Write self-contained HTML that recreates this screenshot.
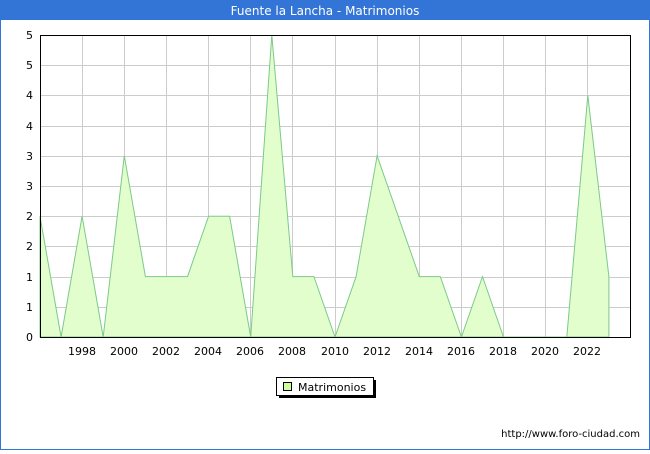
<!DOCTYPE html><html><head><style>body{margin:0;width:650px;height:450px;overflow:hidden;background:#fff;font-family:"DejaVu Sans","Liberation Sans",sans-serif}</style></head><body>
<svg width="650" height="450" xmlns="http://www.w3.org/2000/svg" font-family="DejaVu Sans, Liberation Sans, sans-serif">
<rect x="0.5" y="0" width="649" height="449.5" fill="#fff" stroke="#3375d6" stroke-width="1"/>
<rect x="0" y="0" width="650" height="20" fill="#3375d6"/>
<text x="325" y="15" fill="#fff" font-size="12" text-anchor="middle">Fuente la Lancha - Matrimonios</text>
<g stroke="#ccc" stroke-width="1">
<line x1="40" x2="630" y1="307.5" y2="307.5"/><line x1="40" x2="630" y1="277.5" y2="277.5"/><line x1="40" x2="630" y1="246.5" y2="246.5"/><line x1="40" x2="630" y1="216.5" y2="216.5"/><line x1="40" x2="630" y1="186.5" y2="186.5"/><line x1="40" x2="630" y1="156.5" y2="156.5"/><line x1="40" x2="630" y1="126.5" y2="126.5"/><line x1="40" x2="630" y1="95.5" y2="95.5"/><line x1="40" x2="630" y1="65.5" y2="65.5"/>
<line x1="82.5" x2="82.5" y1="35" y2="337"/><line x1="124.5" x2="124.5" y1="35" y2="337"/><line x1="166.5" x2="166.5" y1="35" y2="337"/><line x1="208.5" x2="208.5" y1="35" y2="337"/><line x1="250.5" x2="250.5" y1="35" y2="337"/><line x1="292.5" x2="292.5" y1="35" y2="337"/><line x1="335.5" x2="335.5" y1="35" y2="337"/><line x1="377.5" x2="377.5" y1="35" y2="337"/><line x1="419.5" x2="419.5" y1="35" y2="337"/><line x1="461.5" x2="461.5" y1="35" y2="337"/><line x1="503.5" x2="503.5" y1="35" y2="337"/><line x1="545.5" x2="545.5" y1="35" y2="337"/><line x1="587.5" x2="587.5" y1="35" y2="337"/>
</g>
<polygon fill="#e2fecc" stroke="#7cc98a" stroke-width="1" points="40,337 40,216.2 61.1,337 82.1,216.2 103.2,337 124.3,155.8 145.4,276.6 166.4,276.6 187.5,276.6 208.6,216.2 229.6,216.2 250.7,337 271.8,35 292.8,276.6 313.9,276.6 335,337 356.1,276.6 377.1,155.8 398.2,216.2 419.3,276.6 440.3,276.6 461.4,337 482.5,276.6 503.5,337 524.6,337 545.7,337 566.8,337 587.8,95.4 608.9,276.6 608.9,337"/>
<rect x="40.5" y="35.5" width="590" height="302" fill="none" stroke="#000" stroke-width="1"/>
<g font-size="11" fill="#000" text-anchor="end">
<text x="33" y="341">0</text><text x="33" y="311">1</text><text x="33" y="281">1</text><text x="33" y="250">2</text><text x="33" y="220">2</text><text x="33" y="190">3</text><text x="33" y="160">3</text><text x="33" y="130">4</text><text x="33" y="99">4</text><text x="33" y="69">5</text><text x="33" y="39">5</text>
</g>
<g font-size="11" fill="#000" text-anchor="middle">
<text x="82" y="355">1998</text><text x="124" y="355">2000</text><text x="166" y="355">2002</text><text x="208" y="355">2004</text><text x="250" y="355">2006</text><text x="292" y="355">2008</text><text x="335" y="355">2010</text><text x="377" y="355">2012</text><text x="419" y="355">2014</text><text x="461" y="355">2016</text><text x="503" y="355">2018</text><text x="545" y="355">2020</text><text x="587" y="355">2022</text>
</g>
<rect x="279" y="380" width="97" height="18" fill="#000"/>
<rect x="276.5" y="377.5" width="97" height="18" fill="#fff" stroke="#000"/>
<rect x="283.5" y="382.5" width="8" height="8" fill="#ccff99" stroke="#000"/>
<text x="298" y="391" font-size="11">Matrimonios</text>
<text x="640" y="437" font-size="10" text-anchor="end">http://www.foro-ciudad.com</text>
</svg></body></html>
